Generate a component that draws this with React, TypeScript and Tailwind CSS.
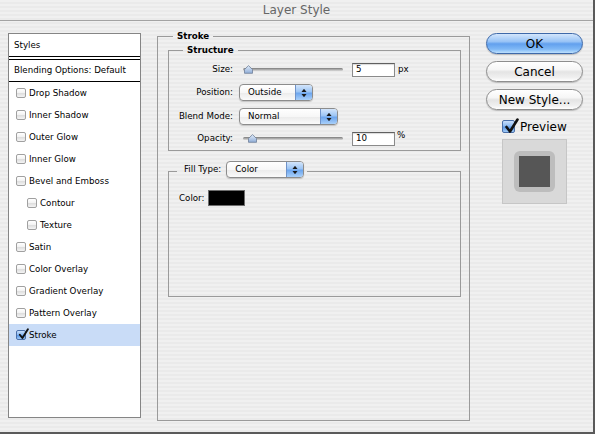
import React from "react";

const stripes =
  "bg-[repeating-linear-gradient(180deg,#f0f0f0_0px,#f0f0f0_2px,#eaeaea_2px,#eaeaea_4px)]";

function Box({ checked = false, size = 10 }: { checked?: boolean; size?: number }) {
  const dim = size === 10 ? "w-[10px] h-[10px]" : "w-[13px] h-[13px]";
  if (!checked) {
    return (
      <span
        className={`${dim} shrink-0 rounded-[2px] border border-[#a0a0a0] bg-[linear-gradient(180deg,#ffffff,#f2f2f2_50%,#dedede_55%,#f4f4f4)]`}
      />
    );
  }
  return (
    <span
      className={`${dim} relative shrink-0 rounded-[2px] border border-[#4a6fa8] bg-[linear-gradient(180deg,#c9dffb,#8bbaf2_45%,#5b97e6_55%,#9fcaf7)]`}
    >
      <svg
        className="absolute left-[1px] top-[-3px]"
        width={size === 10 ? 11 : 15}
        height={size === 10 ? 12 : 16}
        viewBox="0 0 15 16"
      >
        <path d="M2.5 9 L6 13.5 L13.5 1.5" fill="none" stroke="#111" strokeWidth="2.6" strokeLinecap="round" strokeLinejoin="round" />
      </svg>
    </span>
  );
}

function ListRow({
  label,
  indent = false,
  checked = false,
}: {
  label: string;
  indent?: boolean;
  checked?: boolean;
}) {
  return (
    <div
      className={`flex h-[22px] items-center gap-[3px] ${indent ? "pl-[18px]" : "pl-[7px]"} ${
        checked ? "bg-[#c9dcf7]" : ""
      }`}
    >
      <Box checked={checked} />
      <span className="text-[8.7px] leading-none text-black">{label}</span>
    </div>
  );
}

function Stepper() {
  return (
    <svg width="6" height="10" viewBox="0 0 6 10">
      <polygon points="0.5,4 3,0.8 5.5,4" fill="#1a1a1a" />
      <polygon points="0.5,6 3,9.2 5.5,6" fill="#1a1a1a" />
    </svg>
  );
}

function Select({ value, w }: { value: string; w: string }) {
  return (
    <div
      className={`flex h-[17px] ${w} overflow-hidden rounded-[4px] border border-[#8c8c8c] bg-[linear-gradient(180deg,#ffffff,#f7f7f7_50%,#ececec_55%,#fafafa)] shadow-[0_1px_1px_rgba(0,0,0,0.18)]`}
    >
      <span className="flex flex-1 items-center pl-[8px] text-[8.7px] leading-none text-black">
        {value}
      </span>
      <span className="flex w-[17px] items-center justify-center border-l border-[#6f93c9] bg-[linear-gradient(180deg,#d3e5fb,#9cc5f5_45%,#6da6ee_55%,#a9d0fa)]">
        <Stepper />
      </span>
    </div>
  );
}

function Slider({ pos }: { pos: number }) {
  return (
    <div className="relative h-[15px] w-[113px]">
      <div className="absolute left-[4px] top-[6px] h-[3px] w-[100px] rounded-full border-t border-[#8a8a8a] bg-[linear-gradient(180deg,#9a9a9a,#d9d9d9)]" />
      <svg
        className="absolute top-[3px]"
        style={{ left: `${pos}px` }}
        width="9"
        height="9"
        viewBox="0 0 9 9"
      >
        <defs>
          <linearGradient id={`tg${pos}`} x1="0" y1="0" x2="0" y2="1">
            <stop offset="0" stopColor="#e3eefb" />
            <stop offset="1" stopColor="#8facd6" />
          </linearGradient>
        </defs>
        <path d="M0.5 4.5 L4.5 0.6 L8.5 4.5 L8.5 8.3 L0.5 8.3 Z" fill={`url(#tg${pos})`} stroke="#6f7f98" strokeWidth="0.8" />
      </svg>
    </div>
  );
}

function Field({ value }: { value: string }) {
  return (
    <div className="flex h-[14px] w-[43px] items-center border border-[#8a8a8a] border-t-[#5f5f5f] bg-white pl-[3px] text-[8.7px] leading-none text-black shadow-[inset_0_1px_1px_rgba(0,0,0,0.15)]">
      {value}
    </div>
  );
}

function Label({ children }: { children: React.ReactNode }) {
  return (
    <span className="w-[64px] shrink-0 text-right text-[8.7px] leading-none text-black">
      {children}
    </span>
  );
}

function AquaButton({ label, primary = false }: { label: string; primary?: boolean }) {
  return (
    <div
      className={`flex h-[21px] w-[97px] items-center justify-center rounded-full border text-[12px] leading-none text-black shadow-[0_1px_1px_rgba(0,0,0,0.2)] ${
        primary
          ? "border-[#3e69a9] bg-[linear-gradient(180deg,#d3e6fc_0%,#98c3f6_40%,#62a0ee_52%,#80b9f6_80%,#bde0fd_100%)]"
          : "border-[#8e8e8e] bg-[linear-gradient(180deg,#ffffff_0%,#f6f6f6_40%,#e4e4e4_52%,#f0f0f0_82%,#ffffff_100%)]"
      }`}
    >
      {label}
    </div>
  );
}

export default function App() {
  return (
    <div className="h-[434px] w-[595px] overflow-hidden bg-[#5a5a5a] font-['DejaVu_Sans',sans-serif]">
      <div className={`flex h-[432px] w-[593px] flex-col ${stripes}`}>
        {/* title bar */}
        <div className="flex h-[21px] shrink-0 items-center justify-center border-b border-[#a3a3a3] text-[12px] leading-none text-[#666666]">
          Layer Style
        </div>

        {/* body */}
        <div className="flex flex-1 pl-[8px] pt-[9px]">
          {/* left styles list */}
          <div className="mt-[3px] h-[385px] w-[133px] shrink-0 border border-[#858585] bg-white">
            <div className="flex h-[22px] items-center pl-[5px] text-[8.7px] leading-none text-black">
              Styles
            </div>
            <div className="h-[4px] border-y border-black" />
            <div className="flex h-[22px] items-center border-b border-black pl-[5px] text-[8.7px] leading-none text-black">
              Blending Options: Default
            </div>
            <ListRow label="Drop Shadow" />
            <ListRow label="Inner Shadow" />
            <ListRow label="Outer Glow" />
            <ListRow label="Inner Glow" />
            <ListRow label="Bevel and Emboss" />
            <ListRow label="Contour" indent />
            <ListRow label="Texture" indent />
            <ListRow label="Satin" />
            <ListRow label="Color Overlay" />
            <ListRow label="Gradient Overlay" />
            <ListRow label="Pattern Overlay" />
            <ListRow label="Stroke" checked />
          </div>

          {/* Stroke fieldset */}
          <fieldset className="ml-[16px] h-[391px] w-[313px] shrink-0 border border-[#9a9a9a] px-[10px] pr-[8px]">
            <legend className="ml-[5px] h-[12px] px-[4px] text-[8.7px] font-bold leading-[12px] text-black">
              Stroke
            </legend>

            <fieldset className="mt-[2px] border border-[#9a9a9a] pb-[4px]">
              <legend className="ml-[14px] h-[12px] px-[4px] text-[8.7px] font-bold leading-[12px] text-black">
                Structure
              </legend>
              <div className="flex flex-col">
                <div className="mt-[6px] flex h-[15px] items-center">
                  <Label>Size:</Label>
                  <div className="ml-[6px] flex items-center">
                    <Slider pos={5} />
                    <Field value="5" />
                    <span className="ml-[3px] text-[8.7px] leading-none text-black">px</span>
                  </div>
                </div>
                <div className="mt-[7px] flex h-[17px] items-center">
                  <Label>Position:</Label>
                  <div className="ml-[6px]">
                    <Select value="Outside" w="w-[74px]" />
                  </div>
                </div>
                <div className="mt-[7px] flex h-[17px] items-center">
                  <Label>Blend Mode:</Label>
                  <div className="ml-[6px]">
                    <Select value="Normal" w="w-[99px]" />
                  </div>
                </div>
                <div className="mt-[6px] flex h-[15px] items-center">
                  <Label>Opacity:</Label>
                  <div className="ml-[6px] flex items-center">
                    <Slider pos={9} />
                    <Field value="10" />
                    <span className="ml-[2px] self-start text-[8.7px] leading-none text-black">%</span>
                  </div>
                </div>
              </div>
            </fieldset>

            <fieldset className="mt-[10px] border border-[#9a9a9a]">
              <legend className="ml-[8px] flex h-[20px] items-start pl-[7px] pr-[3px]">
                <span className="mr-[5px] mt-[4px] text-[8.7px] leading-none text-black">Fill Type:</span>
                <Select value="Color" w="w-[78px]" />
              </legend>
              <div className="h-[115px] pl-[10px] pt-[9px]">
                <div className="flex h-[16px] items-center">
                  <span className="text-[8.7px] leading-none text-black">Color:</span>
                  <span className="ml-[4px] h-[16px] w-[37px] border border-[#6d6d6d] bg-black" />
                </div>
              </div>
            </fieldset>
          </fieldset>

          {/* right column */}
          <div className="ml-[16px] flex w-[97px] shrink-0 flex-col pt-[3px]">
            <AquaButton label="OK" primary />
            <div className="mt-[7px]">
              <AquaButton label="Cancel" />
            </div>
            <div className="mt-[7px]">
              <AquaButton label="New Style..." />
            </div>
            <div className="mt-[10px] flex h-[13px] items-center gap-[5px] pl-[16px]">
              <Box checked size={13} />
              <span className="text-[12px] leading-none text-black">Preview</span>
            </div>
            <div className="ml-[16px] mt-[6px] flex h-[65px] w-[65px] items-center justify-center border border-[#c6c6c6] bg-[#d9d9d9]">
              <div className="flex h-[41px] w-[41px] items-center justify-center rounded-[6px] bg-[#bdbdbd]">
                <div className="h-[31px] w-[31px] bg-[#565656]" />
              </div>
            </div>
          </div>
        </div>
      </div>
    </div>
  );
}
